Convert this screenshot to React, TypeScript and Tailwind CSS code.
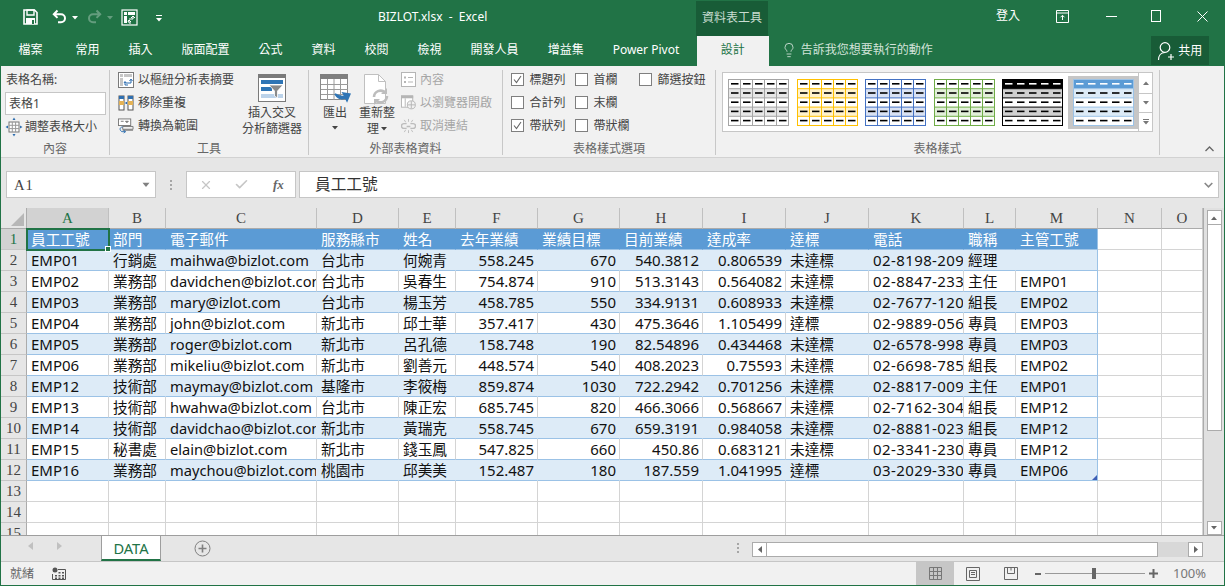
import React from "react";
import { Lightbulb, X, Check } from "lucide-react";

const columns = ["A","B","C","D","E","F","G","H","I","J","K","L","M","N","O"];
const header = ["員工工號","部門","電子郵件","服務縣市","姓名","去年業績","業績目標","目前業績","達成率","達標","電話","職稱","主管工號"];
const rows: string[][] = [
  ["EMP01","行銷處","maihwa@bizlot.com","台北市","何婉青","558.245","670","540.3812","0.806539","未達標","02-8198-209","經理",""],
  ["EMP02","業務部","davidchen@bizlot.com","台北市","吳春生","754.874","910","513.3143","0.564082","未達標","02-8847-233","主任","EMP01"],
  ["EMP03","業務部","mary@izlot.com","台北市","楊玉芳","458.785","550","334.9131","0.608933","未達標","02-7677-120","組長","EMP02"],
  ["EMP04","業務部","john@bizlot.com","新北市","邱士華","357.417","430","475.3646","1.105499","達標","02-9889-056","專員","EMP03"],
  ["EMP05","業務部","roger@bizlot.com","新北市","呂孔德","158.748","190","82.54896","0.434468","未達標","02-6578-998","專員","EMP03"],
  ["EMP06","業務部","mikeliu@bizlot.com","新北市","劉善元","448.574","540","408.2023","0.75593","未達標","02-6698-785","組長","EMP02"],
  ["EMP12","技術部","maymay@bizlot.com","基隆市","李筱梅","859.874","1030","722.2942","0.701256","未達標","02-8817-009","主任","EMP01"],
  ["EMP13","技術部","hwahwa@bizlot.com","台北市","陳正宏","685.745","820","466.3066","0.568667","未達標","02-7162-304","組長","EMP12"],
  ["EMP14","技術部","davidchao@bizlot.com","新北市","黃瑞克","558.745","670","659.3191","0.984058","未達標","02-8881-023","組長","EMP12"],
  ["EMP15","秘書處","elain@bizlot.com","新北市","錢玉鳳","547.825","660","450.86","0.683121","未達標","02-3341-230","專員","EMP12"],
  ["EMP16","業務部","maychou@bizlot.com","桃園市","邱美美","152.487","180","187.559","1.041995","達標","03-2029-330","專員","EMP06"],
];
const numeric = new Set([5,6,7,8]);
const latin = new Set([0,5,6,7,8,12]);
const tabs = ["常用","插入","版面配置","公式","資料","校閱","檢視","開發人員","增益集","Power Pivot"];

function Arrow({ className = "" }: { className?: string }) {
  return <svg width="6" height="4" viewBox="0 0 6 4" className={className}><path d="M0 0h6L3 3.5z" fill="currentColor" /></svg>;
}

function Qat() {
  return (
    <div className="flex items-center text-white">
      <svg width="15" height="16" viewBox="0 0 15 16" className="mb-[2px]">
        <path d="M1 1h10.5L14 3.5V15H1z" fill="none" stroke="currentColor" strokeWidth="1.6" />
        <path d="M4 1h7v5H4z" fill="none" stroke="currentColor" strokeWidth="1.4" />
        <path d="M3 9h9v6H3z" fill="currentColor" />
        <path d="M9 11h2v4H9z" fill="#217346" />
      </svg>
      <svg width="15" height="15" viewBox="0 0 15 15" className="ml-[14px] mb-[3px]">
        <path d="M5.5 1.5 1.8 5.2l3.7 3.7M2 5.2h7a4 4 0 0 1 0 8H6" fill="none" stroke="currentColor" strokeWidth="2" />
      </svg>
      <Arrow className="ml-[5px]" />
      <svg width="15" height="15" viewBox="0 0 15 15" className="ml-[9px] mb-[3px] opacity-30">
        <path d="M9.5 1.5l3.7 3.7-3.7 3.7M13 5.2H6a4 4 0 0 0 0 8h3" fill="none" stroke="currentColor" strokeWidth="2" />
      </svg>
      <Arrow className="ml-[5px] opacity-30" />
      <svg width="17" height="17" viewBox="0 0 17 17" className="ml-[8px] mb-[2px]">
        <rect x="1" y="1" width="15" height="15" fill="none" stroke="currentColor" strokeWidth="1.2" />
        <path d="M3 3h3v3H3zM7 3h7v3H7zM3 7h3v7H3z" fill="currentColor" />
        <path d="M8 10h4V8M12 7l-2 2M12 7l2 2M10 14H8v-3M7 13l1-2 2 2" fill="none" stroke="currentColor" strokeWidth="1" />
      </svg>
      <svg width="6" height="7" viewBox="0 0 6 7" className="ml-[18px]">
        <path d="M0 0h6v1H0zM0 3h6L3 6.5z" fill="currentColor" />
      </svg>
    </div>
  );
}

function WindowButtons() {
  return (
    <div className="flex items-center text-white pb-[4px]">
      <span className="w-[36px] text-[12px] mr-[30px] text-center">登入</span>
      <svg width="13" height="13" viewBox="0 0 13 13" className="mr-[37px]"><path d="M.5.5h12v12H.5zM.5 3h12" fill="none" stroke="currentColor" /><path d="M6.5 10V5.5M4.5 7.3l2-2 2 2" fill="none" stroke="currentColor" /></svg>
      <svg width="11" height="1" viewBox="0 0 11 1" className="mr-[34px]"><path d="M0 .5h11" stroke="currentColor" /></svg>
      <svg width="10" height="12" viewBox="0 0 10 12" className="mr-[36px]"><rect x=".5" y=".5" width="9" height="11" fill="none" stroke="currentColor" /></svg>
      <svg width="11" height="11" viewBox="0 0 11 11"><path d="M.5.5l10 10M10.5.5l-10 10" stroke="currentColor" /></svg>
    </div>
  );
}

function Group({ width, label, children }: { width: string; label: string; children: React.ReactNode }) {
  return (
    <div className={`${width} flex flex-col h-[85px] mt-[4px] border-r border-[#c8c8c8]`}>
      <div className="flex-1 min-h-0 flex">{children}</div>
      <div className="h-[17px] text-center text-[12px] leading-[22px] text-[#666666]">{label}</div>
    </div>
  );
}

function PivotIcon() {
  return (
    <svg width="16" height="16" viewBox="0 0 16 16">
      <rect x=".5" y=".5" width="15" height="15" fill="#fff" stroke="#7a7a7a" />
      <path d="M2 2h3v3H2zM6 2h8v3H6zM2 6h3v8H2z" fill="#c6c6c6" />
      <path d="M8 11h5V8M11.5 9l1.5-2 1.5 2M10 13H7v-3M6 11l1-1.5L8 11" fill="none" stroke="#2b6cb0" />
    </svg>
  );
}
function RemoveDupIcon() {
  return (
    <svg width="16" height="16" viewBox="0 0 16 16">
      <rect x="1" y="1" width="5" height="14" fill="#fff" stroke="#555" />
      <rect x="10" y="1" width="5" height="14" fill="#fff" stroke="#555" />
      <path d="M1 1h5v3H1zM10 1h5v3h-5z" fill="#2f6fb0" />
      <path d="M1 6h5v4H1zM10 6h5v4h-5z" fill="#e4b255" />
      <path d="M7 8h2M8 7l1 1-1 1" fill="none" stroke="#2f6fb0" />
    </svg>
  );
}
function ConvertIcon() {
  return (
    <svg width="16" height="16" viewBox="0 0 17 16">
      <rect x=".5" y=".5" width="13" height="7" fill="#fff" stroke="#777" />
      <path d="M3 3h3M8 3h3l-1.500 1.500z" fill="#777" stroke="#777" />
      <path d="M5 8.500h11v3H5zM5 12.500h11" fill="none" stroke="#777" />
      <path d="M5 9c-3 0-4 3-1 5h4M6 12.500 8 14l-2 1.500" fill="none" stroke="#2f6fb0" />
    </svg>
  );
}
function ResizeIcon() {
  return (
    <svg width="18" height="20" viewBox="0 0 18 20">
      <rect x="4" y="5" width="10" height="10" fill="#fff" stroke="#777" />
      <path d="M4 8.300h10M4 11.600h10M7.300 5v10M10.600 5v10" stroke="#9a9a9a" />
      <path d="M9 .5 7.500 3h3zM9 19.500 7.500 17h3zM.5 10 3 8.500v3zM17.500 10 15 8.500v3z" fill="#2f6fb0" />
    </svg>
  );
}
function SlicerIcon() {
  return (
    <svg width="28" height="28" viewBox="0 0 28 28">
      <rect x=".5" y=".5" width="27" height="27" fill="#fff" stroke="#7a7a7a" />
      <rect x="0" y="0" width="28" height="4" fill="#7a7a7a" />
      <rect x="3" y="6" width="22" height="4" fill="#2f75b5" />
      <rect x="3" y="13" width="11" height="4" fill="#2f75b5" />
      <rect x="3" y="20" width="22" height="4" fill="#bcd3ea" />
      <path d="M11 11h14l-5.500 6v7l-3-2v-5z" fill="#8a8a8a" stroke="#fff" strokeWidth=".8" />
    </svg>
  );
}
function ExportIcon() {
  return (
    <svg width="31" height="33" viewBox="0 0 31 33">
      <rect x=".5" y=".5" width="27" height="25" fill="#fff" stroke="#8a8a8a" />
      <rect x="0" y="0" width="28" height="5" fill="#7f7f7f" />
      <path d="M1 10.500h27M1 15.500h27M1 20.500h27M7.500 5v21M14 5v21M20.500 5v21" stroke="#9a9a9a" />
      <path d="M15 20c5 3 7 3 10 2l-2-3 7 1 -3 7-1.500-3c-5 2-8 0-10.500-4z" fill="#2f75b5" stroke="#2f75b5" strokeWidth="1.500" />
    </svg>
  );
}
function RefreshIcon() {
  return (
    <svg width="28" height="33" viewBox="0 0 28 33">
      <path d="M1.500.5h14l7 7v22h-21z" fill="#fff" stroke="#c0c0c0" />
      <path d="M15.500.5v7h7" fill="none" stroke="#c0c0c0" />
      <path d="M11 23a6.500 6.500 0 0 1 11-4.500M24 22a6.500 6.500 0 0 1-11 4.500" fill="none" stroke="#bdbdbd" strokeWidth="2.600" />
      <path d="M24 14v6h-6zM11 31v-6h6z" fill="#bdbdbd" />
    </svg>
  );
}
function PropsIcon() {
  return (
    <svg width="15" height="15" viewBox="0 0 15 15">
      <rect x=".5" y=".5" width="14" height="14" fill="#fff" stroke="#b5b5b5" />
      <path d="M3 4.500h2v2H3zM3 9h2v2H3z" fill="#b5b5b5" />
      <path d="M7 5.500h5M7 10h5" stroke="#b5b5b5" />
    </svg>
  );
}
function BrowserIcon() {
  return (
    <svg width="15" height="15" viewBox="0 0 16 15">
      <rect x=".5" y=".5" width="12" height="12" fill="#fff" stroke="#b5b5b5" />
      <rect x="0" y="0" width="13" height="3" fill="#b5b5b5" />
      <path d="M4.500 3v9" stroke="#b5b5b5" />
      <circle cx="11" cy="10" r="4.300" fill="#f1f1f1" stroke="#b5b5b5" />
      <path d="M7 10h8M11 6v8" stroke="#b5b5b5" />
    </svg>
  );
}
function UnlinkIcon() {
  return (
    <svg width="15" height="16" viewBox="0 0 16 16">
      <path d="M6 5.500H3a2.500 2.500 0 0 0 0 5h3M10 5.500h3a2.500 2.500 0 0 1 0 5h-3M6 8.500h4" fill="none" stroke="#bcbcbc" strokeWidth="1.500" />
      <path d="M8 .5v3M8 12.500v3M3.500 1.500l1.500 2.500M12.500 1.500 11 4M3.500 14.500 5 12M12.500 14.500 11 12" stroke="#bcbcbc" />
    </svg>
  );
}

function Box({ on }: { on?: boolean }) {
  return (
    <span className="w-[13px] h-[13px] bg-white border border-[#7f7f7f] flex items-center justify-center shrink-0">
      {on && <svg width="9" height="9" viewBox="0 0 9 9"><path d="M1 4.500 3.500 7.500 8 1" fill="none" stroke="#666" strokeWidth="1.100" /></svg>}
    </span>
  );
}
function CheckItem({ label, on }: { label: string; on?: boolean }) {
  return (
    <div className="flex items-center h-[23px] gap-[5.5px] text-[12px] text-[#444444] whitespace-nowrap">
      <Box on={on} />
      <span>{label}</span>
    </div>
  );
}

type Sty = { line: string; band: string; head?: string; verts: boolean; sep?: string };
function StyleThumb({ line, band, head, verts, sep }: Sty) {
  const ys = [0, 9.2, 18.4, 27.6, 36.8];
  const xs = [0, 12, 24, 36, 48];
  return (
    <svg width="61" height="47" viewBox="0 0 61 47" className="block shrink-0">
      <rect x=".5" y=".5" width="60" height="46" fill="#fff" />
      {head && <rect x=".5" y=".5" width="60" height="9.200" fill={head} />}
      <rect x=".5" y="9.700" width="60" height="9.200" fill={band} />
      <rect x=".5" y="28.100" width="60" height="9.200" fill={band} />
      {ys.slice(1).map((y) => <path key={y} d={`M.5 ${y + 0.5}h60`} stroke={sep || line} />)}
      {verts && xs.slice(1).map((x) => <path key={x} d={`M${x + 0.5} .5v46`} stroke={line} />)}
      <rect x=".5" y=".5" width="60" height="46" fill="none" stroke={line} />
      {ys.map((y, i) => xs.map((x) => (
        <rect key={`${x}-${y}`} x={x + 3} y={y + 4} width="7.500" height="1.600" fill={head && i === 0 ? "#fff" : "#000"} />
      )))}
    </svg>
  );
}

function Gallery() {
  return (
    <div className="flex h-[60px] w-[431px] border border-[#c6c6c6] bg-white mt-[2px] ml-[6px]">
      <div className="flex flex-1 items-center pl-[5px] gap-[7.5px]">
        <StyleThumb line="#a5a5a5" band="#e7e7e7" verts />
        <StyleThumb line="#ffc000" band="#fff2cc" verts />
        <StyleThumb line="#4472c4" band="#d9e2f3" verts />
        <StyleThumb line="#70ad47" band="#e2efd9" verts />
        <StyleThumb line="#000000" band="#d0d0d0" head="#000000" verts={false} />
        <div className="bg-[#c6c6c6] w-[70px] h-[53px] shrink-0 flex items-center justify-center -ml-[2.500px]">
          <StyleThumb line="#9bc2e6" band="#ddebf7" head="#5b9bd5" verts={false} />
        </div>
      </div>
      <div className="w-[15px] flex flex-col border-l border-[#c6c6c6] text-[#777777]">
        <div className="h-[21px] border-b border-[#c6c6c6] flex items-center justify-center"><Arrow className="rotate-180" /></div>
        <div className="h-[19px] border-b border-[#c6c6c6] flex items-center justify-center"><Arrow /></div>
        <div className="flex-1 flex flex-col items-center justify-center gap-[1px]"><span className="w-[6px] h-px bg-[#777777]" /><Arrow /></div>
      </div>
    </div>
  );
}

function Ribbon() {
  const toolItem = "flex items-center h-[23.5px] gap-[4px] whitespace-nowrap";
  return (
    <div className="h-[92px] shrink-0 flex bg-[#f1f1f1] border-b border-[#d2d2d2] relative text-[#444444] text-[12px]">
      <Group width="w-[109px]" label="內容">
        <div className="pl-[4px] pt-[1px] flex flex-col">
          <span className="leading-[18px] pl-[1px]">表格名稱:</span>
          <div className="w-[101px] h-[23px] mt-[3px] bg-white border border-[#c6c6c6] pl-[3px] leading-[21px] text-[12px]">表格1</div>
          <div className="flex items-center gap-[2px] mt-[1px] pl-[0px] h-[22px]"><ResizeIcon /><span>調整表格大小</span></div>
        </div>
      </Group>
      <Group width="w-[199px]" label="工具">
        <div className="pl-[8px] -mt-[2px] flex flex-col w-[128px]">
          <div className={toolItem}><PivotIcon /><span>以樞紐分析表摘要</span></div>
          <div className={toolItem}><RemoveDupIcon /><span>移除重複</span></div>
          <div className={toolItem}><ConvertIcon /><span>轉換為範圍</span></div>
        </div>
        <div className="w-[68px] flex flex-col items-center pt-[4px] text-center leading-[16px]">
          <SlicerIcon />
          <span className="mt-[3px] whitespace-nowrap">插入交叉</span>
          <span className="whitespace-nowrap">分析篩選器</span>
        </div>
      </Group>
      <Group width="w-[194px]" label="外部表格資料">
        <div className="w-[52px] flex flex-col items-center pt-[4px] leading-[16px]">
          <ExportIcon />
          <span className="-mt-[2px]">匯出</span>
          <Arrow className="mt-[5px]" />
        </div>
        <div className="w-[32px] flex flex-col items-center pt-[4px] leading-[16px] text-center">
          <RefreshIcon />
          <span className="-mt-[2px] whitespace-nowrap">重新整</span>
          <span className="flex items-center gap-[2px]">理<Arrow /></span>
        </div>
        <div className="flex flex-col pl-[8px] -mt-[2px] text-[#a6a6a6]">
          <div className={toolItem}><PropsIcon /><span>內容</span></div>
          <div className={toolItem}><BrowserIcon /><span>以瀏覽器開啟</span></div>
          <div className={toolItem}><UnlinkIcon /><span>取消連結</span></div>
        </div>
      </Group>
      <Group width="w-[213px]" label="表格樣式選項">
        <div className="pl-[8px] -mt-[2px] w-[72px]">
          <CheckItem label="標題列" on />
          <CheckItem label="合計列" />
          <CheckItem label="帶狀列" on />
        </div>
        <div className="w-[64px] -mt-[2px]">
          <CheckItem label="首欄" />
          <CheckItem label="末欄" />
          <CheckItem label="帶狀欄" />
        </div>
        <div className="-mt-[2px]"><CheckItem label="篩選按鈕" /></div>
      </Group>
      <Group width="w-[444px]" label="表格樣式"><Gallery /></Group>
      <svg width="9" height="6" viewBox="0 0 9 6" className="absolute right-[10px] bottom-[5px] text-[#666666]"><path d="M.5 5 4.500 1l4 4" fill="none" stroke="currentColor" strokeWidth="1.300" /></svg>
    </div>
  );
}

function FormulaBar() {
  return (
    <div className="h-[50px] shrink-0 bg-[#e6e6e6] flex items-start pt-[13px] pl-[5px] pr-[5px]">
      <div className="w-[150px] h-[27px] bg-white border border-[#c6c6c6] flex items-center justify-between px-[7px] text-[#444444] text-[14.67px] font-['Liberation_Serif',serif]">
        <span className="tracking-[1px]">A1</span>
        <Arrow className="text-[#808080] scale-125 mr-[-1px]" />
      </div>
      <div className="w-[30px] h-[27px] flex flex-col items-center justify-center gap-[2px]">
        <span className="w-[2px] h-[2px] bg-[#a6a6a6]" /><span className="w-[2px] h-[2px] bg-[#a6a6a6]" /><span className="w-[2px] h-[2px] bg-[#a6a6a6]" />
      </div>
      <div className="w-[110px] h-[27px] bg-white border border-[#c6c6c6] flex items-center text-[#c6c6c6]">
        <X size={14} strokeWidth={2} className="ml-[12px]" />
        <Check size={15} strokeWidth={2.6} className="ml-[21px]" />
        <span className="ml-[24px] italic font-bold text-[#666666] text-[13px] font-['Liberation_Serif',serif]">fx</span>
      </div>
      <div className="ml-[3px] flex-1 h-[27px] bg-white border border-[#c6c6c6] flex items-center justify-between pl-[15px] pr-[5px] text-[15.7px] text-[#333333]">
        <span>員工工號</span>
        <svg width="9" height="6" viewBox="0 0 9 6" className="text-[#888888]"><path d="M.7 1l3.800 3.800L8.300 1" fill="none" stroke="currentColor" strokeWidth="1.600" /></svg>
      </div>
    </div>
  );
}

function RowHead({ n, active }: { n: number; active?: boolean }) {
  return (
    <div className={`flex items-center justify-center border-r border-b border-r-[#ababab] border-b-[#c6c6c6] text-[15px] font-['Liberation_Serif',serif] ${active ? "bg-[#d2d2d2] text-[#217346]" : "bg-[#e6e6e6] text-[#444444]"}`}>{n}</div>
  );
}

function Sheet() {
  return (
    <div className="relative flex-1 min-w-0 h-[327px] overflow-hidden bg-white">
      <div className="grid grid-cols-[26px_82px_57px_151px_82px_57px_82px_82px_83px_83px_83px_95px_52px_82px_64px_41px] auto-rows-[21px] text-[#111111] text-[14.67px]">
        <div className="bg-[#e6e6e6] border-r border-b border-[#ababab] flex items-end justify-end p-[2px]">
          <svg width="13" height="13" viewBox="0 0 13 13"><path d="M13 0v13H0z" fill="#b7b7b7" /></svg>
        </div>
        {columns.map((c, i) => (
          <div key={c} className={`flex items-center justify-center pt-[1px] border-b border-r border-b-[#ababab] border-r-[#c0c0c0] text-[15px] font-['Liberation_Serif',serif] ${i === 0 ? "bg-[#d2d2d2] text-[#217346]" : "bg-[#e6e6e6] text-[#444444]"}`}>{c}</div>
        ))}

        <RowHead n={1} active />
        {header.map((h, i) => (
          <div key={h} className={`flex items-center pl-[4px] whitespace-nowrap overflow-hidden bg-[#5b9bd5] text-white border-b border-b-[#9bc2e6] border-r ${i === 12 ? "border-r-[#9bc2e6]" : "border-r-transparent"}`}>{h}</div>
        ))}
        <div className="border-r border-b border-[#d4d4d4]" />
        <div className="border-r border-b border-[#d4d4d4]" />

        {rows.map((r, ri) => {
          const band = ri % 2 === 0;
          return (
            <React.Fragment key={r[0]}>
              <RowHead n={ri + 2} />
              {r.map((v, ci) => (
                <div key={ci} className={`relative flex items-center overflow-hidden whitespace-nowrap border-b border-r border-b-[#9bc2e6] ${band ? "bg-[#ddebf7]" : "bg-white"} ${ci === 12 ? "border-r-[#9bc2e6]" : band ? "border-r-transparent" : "border-r-[#d4d4d4]"} ${numeric.has(ci) ? "justify-end pr-[3px]" : "pl-[4px]"} ${latin.has(ci) ? "text-[15px]" : ci === 10 ? "text-[15px] tracking-[0.4px]" : "text-[14.67px]"}`}>
                  {v}
                  {ci === 12 && ri === 10 && (
                    <svg width="5" height="5" viewBox="0 0 5 5" className="absolute right-0 bottom-0"><path d="M5 0v5H0z" fill="#3f5fb5" /></svg>
                  )}
                </div>
              ))}
              <div className="border-r border-b border-[#d4d4d4]" />
              <div className="border-r border-b border-[#d4d4d4]" />
            </React.Fragment>
          );
        })}

        {[13, 14, 15].map((n) => (
          <React.Fragment key={n}>
            <RowHead n={n} />
            {columns.map((c) => <div key={c} className="border-r border-b border-[#d4d4d4]" />)}
          </React.Fragment>
        ))}
      </div>
      <div className="absolute left-[25px] top-[20px] w-[84px] h-[23px] border-2 border-[#217346]">
        <span className="absolute right-[-3px] bottom-[-3px] w-[6px] h-[6px] bg-[#217346] border border-white" />
      </div>
    </div>
  );
}

function VScroll() {
  return (
    <div className="w-[21px] h-[327px] border-l border-[#ababab] bg-[#e0e0e0] flex flex-col items-center pt-[2px] pb-0">
      <div className="w-[15px] h-[15px] bg-white border border-[#ababab] flex items-center justify-center text-[#666666]"><Arrow className="rotate-180" /></div>
      <div className="w-[15px] h-[206px] bg-white border-x border-b border-[#ababab]" />
      <div className="flex-1" />
      <div className="w-[15px] h-[14px] bg-white border border-[#ababab] flex items-center justify-center text-[#666666]"><Arrow /></div>
    </div>
  );
}

function SheetTabs() {
  return (
    <div className="h-[27px] shrink-0 bg-[#e6e6e6] border-t border-b border-t-[#9e9e9e] border-b-[#c6c6c6] flex items-start text-[14.67px]">
      <div className="w-[100px] flex items-center pt-[6px] pl-[27px] text-[#c0c0c0]">
        <svg width="5" height="8" viewBox="0 0 5 8"><path d="M5 0v8L0 4z" fill="currentColor" /></svg>
        <svg width="5" height="8" viewBox="0 0 5 8" className="ml-[24px]"><path d="M0 0v8l5-4z" fill="currentColor" /></svg>
      </div>
      <div className="w-[60px] h-[25px] bg-white border-x border-[#9e9e9e] border-b-2 border-b-[#217346] flex items-center justify-center text-[#217346]">DATA</div>
      <div className="w-[33px]" />
      <svg width="17" height="17" viewBox="0 0 17 17" className="mt-[4px] text-[#7f7f7f]">
        <circle cx="8.500" cy="8.500" r="7.500" fill="none" stroke="currentColor" />
        <path d="M8.500 4.500v8M4.500 8.500h8" stroke="currentColor" strokeWidth="1.600" />
      </svg>
      <div className="flex-1" />
      <div className="flex flex-col gap-[2px] pt-[7px] mr-[13px]">
        <span className="w-[2px] h-[2px] bg-[#a6a6a6]" /><span className="w-[2px] h-[2px] bg-[#a6a6a6]" /><span className="w-[2px] h-[2px] bg-[#a6a6a6]" />
      </div>
      <div className="flex w-[451px] h-[15px] mt-[6px] mr-[21px] bg-[#d8d8d8]">
        <div className="w-[15px] bg-white border border-[#ababab] flex items-center justify-center text-[#666666]"><svg width="4" height="7" viewBox="0 0 4 7"><path d="M4 0v7L0 3.500z" fill="currentColor" /></svg></div>
        <div className="w-[391px] bg-white border-y border-r border-[#ababab]" />
        <div className="flex-1" />
        <div className="w-[15px] bg-white border border-[#ababab] flex items-center justify-center text-[#666666]"><svg width="4" height="7" viewBox="0 0 4 7"><path d="M0 0v7l4-3.500z" fill="currentColor" /></svg></div>
      </div>
    </div>
  );
}

function StatusBar() {
  return (
    <div className="flex-1 min-h-0 bg-[#f1f1f1] flex items-stretch text-[12px] text-[#666666]">
      <span className="pl-[9px] pt-[1px] w-[51px] leading-[22px]">就緒</span>
      <svg width="14" height="13" viewBox="0 0 14 13" className="mt-[5px] text-[#555555]">
        <circle cx="3" cy="3" r="2.500" fill="currentColor" />
        <path d="M6 2.500h7.500v10H.5V7" fill="none" stroke="currentColor" />
        <path d="M3 8h2v1.500H3zM6.500 8h2v1.500h-2zM10 8h2v1.500h-2zM6.500 5h2v1.500h-2zM10 5h2v1.500h-2zM3 10.500h2V12H3zM6.500 10.500h2V12h-2zM10 10.500h2V12h-2z" fill="currentColor" />
      </svg>
      <div className="flex-1" />
      <div className="w-[38px] bg-[#c6c6c6] flex items-center justify-center">
        <svg width="13" height="13" viewBox="0 0 13 13"><path d="M.5.500h12v12H.5zM.5 4.500h12M.5 8.500h12M4.500.500v12M8.500.500v12" fill="none" stroke="#777" /></svg>
      </div>
      <div className="w-[38px] flex items-center justify-center">
        <svg width="14" height="14" viewBox="0 0 14 14"><path d="M.5.500h13v13H.5zM3.500 3.500h7v7h-7zM5 5.500h4M5 7.500h4" fill="none" stroke="#666" /></svg>
      </div>
      <div className="w-[38px] flex items-center justify-center">
        <svg width="14" height="13" viewBox="0 0 14 13"><path d="M.5.500h13v12H.5zM3.500.500v6h7v-6M7 .500v3" fill="none" stroke="#666" /></svg>
      </div>
      <div className="flex items-center ml-[5px]">
        <span className="w-[6px] h-[2px] bg-[#666666]" />
        <div className="relative w-[100px] h-px bg-[#999999] mx-[4px]">
          <span className="absolute left-[47px] top-[-5px] w-[4px] h-[11px] bg-[#666666]" />
        </div>
        <svg width="9" height="9" viewBox="0 0 9 9"><path d="M4.500 0v9M0 4.500h9" stroke="#666" strokeWidth="2" /></svg>
      </div>
      <span className="w-[66px] pl-[15px] leading-[22px] text-[13px] text-[#777777]">100%</span>
    </div>
  );
}

export default function App() {
  return (
    <div className="w-[1225px] h-[586px] flex flex-col overflow-hidden font-['Noto_Sans','Noto_Sans_CJK_TC',sans-serif] bg-[#e6e6e6]">
      <div className="h-[36px] shrink-0 flex bg-[#217346] text-[12px]">
        <div className="w-[378px] pl-[23px] flex items-center"><Qat /></div>
        <div className="w-[318px] flex items-center pb-[3px] text-white whitespace-pre">BIZLOT.xlsx  -  Excel</div>
        <div className="w-[72px] mt-[1px] pb-[2px] bg-[#185c37] text-[#c9dcd1] flex items-center justify-center">資料表工具</div>
        <div className="flex-1 flex items-center pl-[222px]"><WindowButtons /></div>
      </div>
      <div className="h-[30px] shrink-0 flex bg-[#217346] text-white text-[12px] leading-[28px]">
        <div className="w-[61px] text-center">檔案</div>
        {tabs.map((t) => <div key={t} className="px-[14.5px] whitespace-nowrap">{t}</div>)}
        <div className="ml-[3px] w-[72px] bg-[#f1f1f1] text-[#217346] text-center">設計</div>
        <div className="flex items-center h-[28px] ml-[12px] text-[#d3e3da] gap-[4px] w-[370px]">
          <Lightbulb size={16} strokeWidth={1.3} />
          <span>告訴我您想要執行的動作</span>
        </div>
        <div className="w-[58px] h-[29px] bg-[#185c37] flex items-center justify-center gap-[2px]">
          <svg width="19" height="20" viewBox="0 0 19 20"><circle cx="8" cy="6.500" r="4.800" fill="none" stroke="#fff" strokeWidth="1.200" /><path d="M1.500 19c0-4.500 2.500-7.500 6.500-7.500M14 13v6M11 16h6" fill="none" stroke="#fff" strokeWidth="1.200" /></svg>
          <span>共用</span>
        </div>
      </div>
      <div className="flex-1 min-h-0 flex flex-col border-x border-b border-[#217346]">
        <Ribbon />
        <FormulaBar />
        <div className="flex shrink-0">
          <Sheet />
          <VScroll />
        </div>
        <SheetTabs />
        <StatusBar />
      </div>
    </div>
  );
}
